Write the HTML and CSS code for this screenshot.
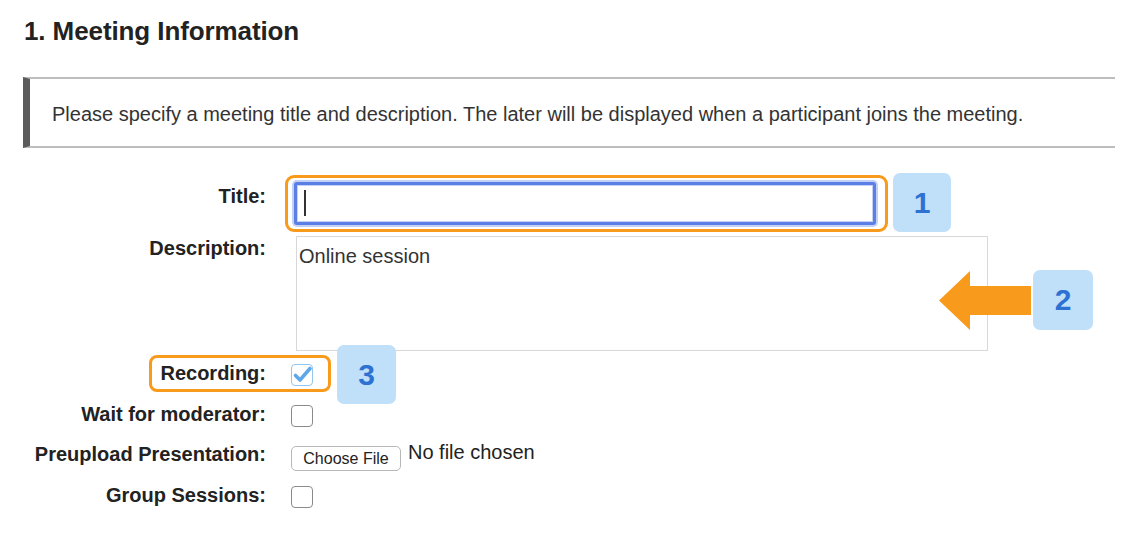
FILE: index.html
```html
<!DOCTYPE html>
<html>
<head>
<meta charset="utf-8">
<link rel="stylesheet" href="styles.css">
</head>
<body>
<div class="page">
  <h1 class="heading">1. Meeting Information</h1>
  <div class="info">Please specify a meeting title and description. The later will be displayed when a participant joins the meeting.</div>
  <div class="form">
    <div class="row row-title">
      <label class="lbl lbl-title">Title:</label>
      <div class="hl-input">
        <div class="text-input"><span class="caret"></span></div>
      </div>
      <span class="badge badge-1">1</span>
    </div>
    <div class="row row-desc">
      <label class="lbl lbl-desc">Description:</label>
      <div class="textarea">Online session</div>
      <svg class="arrow" width="92" height="59" viewBox="0 0 92 59"><polygon points="0,29.5 31,0 31,15 92,15 92,44 31,44 31,59" fill="#f89a1c"/></svg>
      <span class="badge badge-2">2</span>
    </div>
    <div class="row row-check row-rec">
      <span class="hl-box"></span>
      <label class="lbl">Recording:</label>
      <span class="cb cb-checked"><svg width="24" height="24" viewBox="0 0 24 24"><path d="M5.5 12.5 L10 17 L20 5.5" fill="none" stroke="#5ea8ea" stroke-width="3.6" stroke-linecap="round" stroke-linejoin="round"/></svg></span>
      <span class="badge badge-3">3</span>
    </div>
    <div class="row row-check">
      <label class="lbl">Wait for moderator:</label>
      <span class="cb"></span>
    </div>
    <div class="row row-file">
      <label class="lbl lbl-file">Preupload Presentation:</label>
      <span class="file-btn">Choose File</span>
      <span class="file-text">No file chosen</span>
    </div>
    <div class="row row-check row-last">
      <label class="lbl">Group Sessions:</label>
      <span class="cb"></span>
    </div>
  </div>
</div>
</body>
</html>
```
FILE: styles.css
```css
html, body {
  margin: 0;
  padding: 0;
  background: #fff;
}
body {
  font-family: "Liberation Sans", Arial, sans-serif;
  color: #333;
}
.page {
  padding: 0 31px 0 23px;
}
.heading {
  margin: 17px 0 0 1px;
  font-size: 26px;
  line-height: 28px;
  font-weight: bold;
  color: #222;
  letter-spacing: -0.1px;
}
.info {
  margin-top: 32px;
  border-top: 2px solid #bdbdbd;
  border-bottom: 2px solid #bdbdbd;
  border-left: 7px solid #5b5b5b;
  padding: 25px 0 22px 22px;
  font-size: 20px;
  line-height: 20px;
  color: #333;
}
.form {
  margin-top: 27px;
}
.row {
  position: relative;
  display: flex;
  align-items: center;
}
.lbl {
  width: 243px;
  flex: none;
  text-align: right;
  font-weight: bold;
  font-size: 20px;
  line-height: 20px;
  color: #222;
}
.row-title {
  align-items: flex-start;
}
.lbl-title {
  padding-top: 11px;
}
.hl-input {
  margin-left: 19px;
  width: 603px;
  height: 57px;
  box-sizing: border-box;
  border: 3px solid #f89a1c;
  border-radius: 9px;
  padding: 4px 9px 4px 6px;
}
.text-input {
  width: 582px;
  height: 43px;
  box-sizing: border-box;
  border: 3px solid #5b7fe4;
  border-radius: 3px;
  box-shadow: 0 0 0 2px #c3d1f7, inset 0 0 0 1px #c3d1f7;
  background: #fff;
  padding: 5px 0 0 7px;
}
.caret {
  display: block;
  width: 1.5px;
  height: 26px;
  background: #333;
}
.badge {
  flex: none;
  width: 59px;
  height: 59px;
  border-radius: 7px;
  background: #c0dff8;
  color: #2d71d3;
  font-weight: bold;
  font-size: 30px;
  display: flex;
  align-items: center;
  justify-content: center;
}
.badge-1 {
  margin-left: 5px;
  margin-top: -2px;
  width: 58px;
}
.row-desc {
  margin-top: 4px;
  align-items: flex-start;
}
.lbl-desc {
  padding-top: 2px;
}
.textarea {
  margin-left: 30px;
  width: 692px;
  height: 115px;
  box-sizing: border-box;
  border: 1px solid #d8d8d8;
  padding: 9px 0 0 2px;
  font-size: 20px;
  line-height: 20px;
  color: #333;
}
.arrow {
  position: absolute;
  left: 916px;
  top: 35px;
}
.badge-2 {
  position: absolute;
  left: 1010px;
  top: 34px;
  width: 60px;
  height: 60px;
}
.row-check {
  height: 22px;
  margin-top: 19px;
}
.row-rec {
  margin-top: 13px;
}
.row-check .lbl {
  margin-bottom: 4px;
}
.lbl-file {
  margin-bottom: 10px;
}
.cb {
  flex: none;
  margin-left: 25px;
  width: 22px;
  height: 22px;
  box-sizing: border-box;
  border: 1px solid #8a8a8a;
  border-radius: 4px;
  background: #fff;
}
.cb-checked {
  border: 1.5px solid #92c5ef;
  background: #fff;
  position: relative;
}
.cb-checked svg {
  position: absolute;
  left: -2px;
  top: -2px;
}
.hl-box {
  position: absolute;
  left: 126px;
  top: -9px;
  width: 182px;
  height: 37px;
  box-sizing: border-box;
  border: 3px solid #f89a1c;
  border-radius: 8px;
}
.badge-3 {
  position: absolute;
  left: 314px;
  top: -19px;
}
.row-file {
  height: 25px;
  margin-top: 19px;
}
.file-btn {
  flex: none;
  margin-left: 25px;
  width: 110px;
  height: 25px;
  box-sizing: border-box;
  border: 1px solid #b8b8b8;
  border-radius: 5px;
  background: #fff;
  font-size: 16px;
  line-height: 23px;
  text-align: center;
  color: #222;
}
.file-text {
  margin-left: 7px;
  align-self: flex-start;
  margin-top: -4px;
  font-size: 20px;
  line-height: 20px;
  color: #222;
}
.row-last {
  margin-top: 15px;
}
```
